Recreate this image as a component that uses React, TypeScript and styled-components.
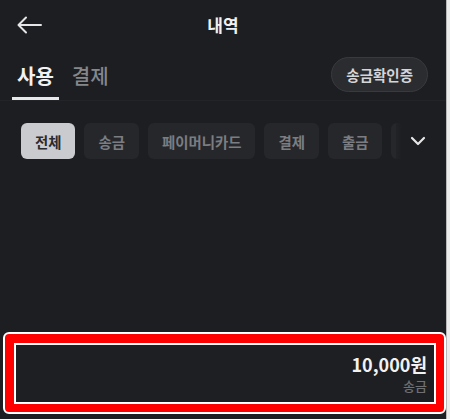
import React from "react";
import styled, { createGlobalStyle } from "styled-components";

const Global = createGlobalStyle`
  html, body { margin: 0; padding: 0; background: #1d1e22; overflow: hidden; }
  body { font-family: "Noto Sans CJK KR", "Noto Sans", sans-serif; }
  * { box-sizing: border-box; }
`;

const Page = styled.div`
  display: flex;
  width: 450px;
  height: 419px;
`;

const Screen = styled.div`
  width: 446px;
  height: 419px;
  background: #1d1e22;
  display: flex;
  flex-direction: column;
`;

const EdgeStrip = styled.div`
  flex: 1;
  background: #ececec;
  border-left: 1px solid #b8b8b8;
`;

const Header = styled.div`
  height: 48px;
  display: grid;
  grid-template-columns: 1fr auto 1fr;
  align-items: center;
  padding: 0 16px;
`;

const BackButton = styled.div`
  display: flex;
  align-items: center;
  padding-top: 2px;
`;

const Title = styled.div`
  color: #f0f0f0;
  font-size: 17px;
  font-weight: 700;
`;

const TabsRow = styled.div`
  height: 53px;
  display: flex;
  align-items: center;
  padding: 0 18px 0 12px;
  border-bottom: 1px solid #232428;
`;

const Tab = styled.div<{ $active?: boolean }>`
  height: 100%;
  display: flex;
  align-items: center;
  padding: 6px 5px 0;
  margin-right: 8px;
  font-size: 20px;
  font-weight: ${(p) => (p.$active ? 700 : 500)};
  color: ${(p) => (p.$active ? "#f2f2f2" : "#85878b")};
  border-bottom: 3px solid ${(p) => (p.$active ? "#e8e8e8" : "transparent")};
`;

const Grow = styled.div`
  flex: 1;
`;

const Pill = styled.div`
  height: 35px;
  padding: 0 14px;
  display: flex;
  align-items: center;
  border-radius: 18px;
  background: #2a2c30;
  border: 1px solid #383a3f;
  color: #d4d5d8;
  font-size: 14.5px;
  font-weight: 700;
`;

const ChipsWrap = styled.div`
  position: relative;
  padding: 22px 0 0 21px;
  overflow: hidden;
`;

const Chips = styled.div`
  display: flex;
  gap: 9px;
  width: max-content;
`;

const Chip = styled.div<{ $active?: boolean }>`
  height: 36px;
  padding: 0 14px;
  display: flex;
  align-items: center;
  border-radius: 6px;
  font-size: 14.4px;
  font-weight: 700;
  background: ${(p) => (p.$active ? "#c9cbcf" : "#25272b")};
  color: ${(p) => (p.$active ? "#2a2b2e" : "#7b7d82")};
`;

const ChevronOverlay = styled.div`
  position: absolute;
  right: 0;
  top: 22px;
  width: 50px;
  height: 36px;
  display: flex;
  align-items: center;
  justify-content: flex-end;
  padding-right: 20px;
  background: linear-gradient(to right, rgba(29, 30, 34, 0.5) 0px, #1d1e22 6px);
`;

const Highlight = styled.div`
  margin: 0 0 5px 3px;
  height: 82px;
  border: 2px solid #ffffff;
  border-radius: 6px;
  background: #ff0000;
  padding: 9px 8px 8px 9px;
  display: flex;
`;

const HighlightInner = styled.div`
  flex: 1;
  border: 2px solid #ffffff;
  background: #1e1f22;
  display: flex;
  flex-direction: column;
  align-items: flex-end;
  justify-content: center;
  padding-right: 7px;
`;

const Amount = styled.div`
  color: #f2f2f2;
  font-size: 18px;
  font-weight: 700;
  line-height: 22px;
`;

const SubLabel = styled.div`
  color: #6e7074;
  font-size: 13px;
  font-weight: 500;
  line-height: 18px;
  margin-top: 2px;
`;

const chips = ["전체", "송금", "페이머니카드", "결제", "출금", "입금"];

export default function App() {
  return (
    <>
      <Global />
      <Page>
        <Screen>
          <Header>
            <BackButton>
              <svg width="26" height="18" viewBox="0 0 26 18" fill="none">
                <path
                  d="M25 9H3M10 1.5L2.5 9L10 16.5"
                  stroke="#e6e6e6"
                  strokeWidth="2"
                  strokeLinecap="round"
                  strokeLinejoin="round"
                />
              </svg>
            </BackButton>
            <Title>내역</Title>
            <div />
          </Header>
          <TabsRow>
            <Tab $active>사용</Tab>
            <Tab>결제</Tab>
            <Grow />
            <Pill>송금확인증</Pill>
          </TabsRow>
          <ChipsWrap>
            <Chips>
              {chips.map((c, i) => (
                <Chip key={c} $active={i === 0}>
                  {c}
                </Chip>
              ))}
            </Chips>
            <ChevronOverlay>
              <svg width="16" height="10" viewBox="0 0 16 10" fill="none">
                <path
                  d="M2 2L8 8L14 2"
                  stroke="#e6e6e6"
                  strokeWidth="2.2"
                  strokeLinecap="round"
                  strokeLinejoin="round"
                />
              </svg>
            </ChevronOverlay>
          </ChipsWrap>
          <Grow />
          <Highlight>
            <HighlightInner>
              <Amount>10,000원</Amount>
              <SubLabel>송금</SubLabel>
            </HighlightInner>
          </Highlight>
        </Screen>
        <EdgeStrip />
      </Page>
    </>
  );
}
